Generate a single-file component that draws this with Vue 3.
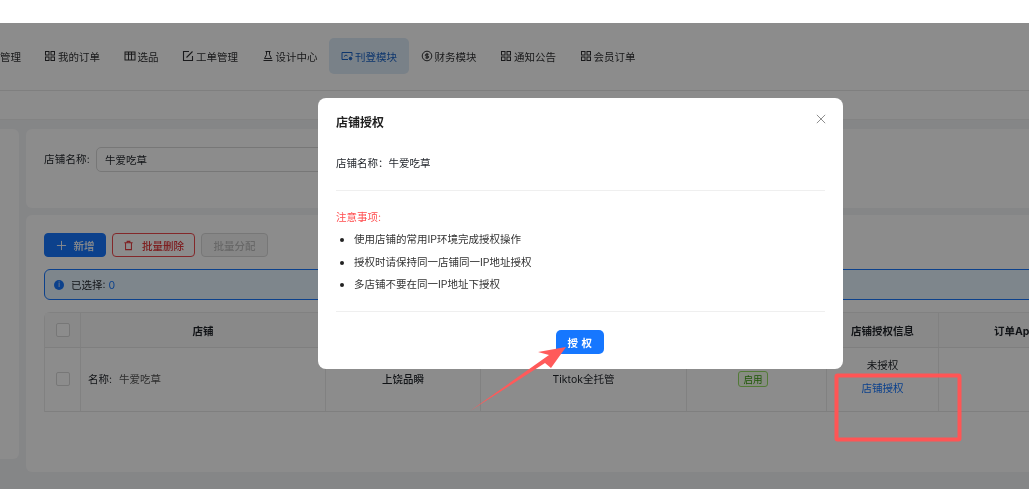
<script setup>
const navItems = [
  { label: '管理', icon: 'none', cut: true },
  { label: '我的订单', icon: 'apps' },
  { label: '选品', icon: 'table' },
  { label: '工单管理', icon: 'edit' },
  { label: '设计中心', icon: 'flask' },
  { label: '刊登模块', icon: 'screen', active: true },
  { label: '财务模块', icon: 'coin' },
  { label: '通知公告', icon: 'apps' },
  { label: '会员订单', icon: 'apps' },
]
const notes = ['使用店铺的常用IP环境完成授权操作', '授权时请保持同一店铺同一IP地址授权', '多店铺不要在同一IP地址下授权']
</script>

<template>
  <div class="shot">
    <div class="topstrip"></div>
    <div class="stage">
      <nav class="nav">
        <a v-for="item in navItems" :key="item.label" class="nav-item" :class="{ active: item.active, cut: item.cut }">
          <svg v-if="item.icon === 'apps'" class="ico" viewBox="0 0 12 12" fill="none" stroke="currentColor" stroke-width="1">
            <rect x="1.5" y="1.5" width="3.5" height="3.5" /><rect x="7" y="1.5" width="3.5" height="3.5" />
            <rect x="1.5" y="7" width="3.5" height="3.5" /><rect x="7" y="7" width="3.5" height="3.5" />
          </svg>
          <svg v-else-if="item.icon === 'table'" class="ico" viewBox="0 0 12 12" fill="none" stroke="currentColor" stroke-width="1">
            <rect x="1" y="2" width="10" height="8" /><path d="M1 4.2h10M4.5 2v8M7.5 2v8" />
          </svg>
          <svg v-else-if="item.icon === 'edit'" class="ico" viewBox="0 0 12 12" fill="none" stroke="currentColor" stroke-width="1.1">
            <path d="M10.5 6v4.5h-9v-9H7" /><path d="M4.5 7.5 10.5 1.5" />
          </svg>
          <svg v-else-if="item.icon === 'flask'" class="ico" viewBox="0 0 12 12" fill="none" stroke="currentColor" stroke-width="1">
            <path d="M3.5 1.5h5M4.5 1.5v3.2L2.5 8.5h7L7.5 4.7V1.5M1.5 10.5h9" />
          </svg>
          <svg v-else-if="item.icon === 'screen'" class="ico" viewBox="0 0 12 12" fill="none" stroke="currentColor" stroke-width="1">
            <path d="M11 6V2.5H1v7h6" /><path d="M3 6.5 5 5l1.5 1" /><circle cx="9.5" cy="8.5" r="1.3" fill="currentColor" />
          </svg>
          <svg v-else-if="item.icon === 'coin'" class="ico" viewBox="0 0 12 12" fill="none" stroke="currentColor" stroke-width="1">
            <circle cx="6" cy="6" r="4.8" /><path d="M7.6 4.3H5.2a.9.9 0 0 0 0 1.8h1.6a.9.9 0 0 1 0 1.8H4.4M6 3v6" />
          </svg>
          <span>{{ item.label }}</span>
        </a>
      </nav>
      <div class="tabs"></div>
      <main class="main">
        <aside class="side"></aside>
        <div class="content">
          <section class="card search">
            <label class="search-label">店铺名称:</label>
            <div class="input">牛爱吃草</div>
          </section>
          <section class="card list">
            <div class="actions">
              <button class="btn primary">
                <svg class="btn-ico" viewBox="0 0 12 12" fill="none" stroke="currentColor" stroke-width="1"><path d="M6 1v10M1 6h10" /></svg>
                新增
              </button>
              <button class="btn danger">
                <svg class="btn-ico" viewBox="0 0 12 12" fill="none" stroke="currentColor" stroke-width="1.1"><path d="M1.5 3h9M4.5 3V1.5h3V3M2.8 3v7.5h6.4V3" /></svg>
                批量删除
              </button>
              <button class="btn muted">批量分配</button>
            </div>
            <div class="alert">
              <span class="alert-dot">i</span>
              <span>已选择: <em>0</em></span>
            </div>
            <div class="table">
              <div class="row head">
                <div class="cell c0"><i class="check"></i></div>
                <div class="cell c1">店铺</div>
                <div class="cell c2"></div>
                <div class="cell c3"></div>
                <div class="cell c4"></div>
                <div class="cell c5">店铺授权信息</div>
                <div class="cell c6 api">订单Api</div>
              </div>
              <div class="row body">
                <div class="cell c0"><i class="check"></i></div>
                <div class="cell c1 name"><b>名称:</b>牛爱吃草</div>
                <div class="cell c2 shop">上饶品瞬</div>
                <div class="cell c3">Tiktok全托管</div>
                <div class="cell c4"><span class="tag">启用</span></div>
                <div class="cell c5 auth"><span>未授权</span><a>店铺授权</a></div>
                <div class="cell c6"></div>
              </div>
            </div>
          </section>
        </div>
      </main>

      <div class="mask"></div>

      <div class="modal">
        <header class="modal-head">
          <h3>店铺授权</h3>
          <svg class="close" viewBox="0 0 12 12" fill="none" stroke="currentColor" stroke-width="1"><path d="M1 1l10 10M11 1 1 11" /></svg>
        </header>
        <p class="store">店铺名称：牛爱吃草</p>
        <div class="notice">
          <p class="notice-title">注意事项:</p>
          <ul>
            <li v-for="n in notes" :key="n">{{ n }}</li>
          </ul>
        </div>
        <footer class="modal-foot"><button class="auth-btn">授 权</button></footer>
      </div>
    </div>

    <svg class="mark" width="1029" height="489" viewBox="0 0 1029 489">
      <polygon points="470,411 549,355 538,352 566,347 551,368 545,363" fill="#ff5a5a" />
      <rect x="836.5" y="375.5" width="123" height="64" rx="1" fill="none" stroke="#ff5555" stroke-width="4" />
    </svg>
  </div>
</template>

<style scoped>
.shot {
  position: relative;
  width: 1029px;
  height: 489px;
  overflow: hidden;
  background: #fff;
  font-family: "Inter", "Noto Sans CJK SC", "Liberation Sans", sans-serif;
  font-size: 10.5px;
  color: #1f2329;
}
.topstrip { height: 23px; background: #fff; }
.stage {
  position: relative;
  height: 466px;
  overflow: hidden;
  background: #f3f4f6;
  filter: blur(0.3px);
}
.nav {
  display: flex;
  align-items: center;
  height: 68px;
  margin-left: -21px;
  padding-bottom: 1px;
  background: #fff;
  border-bottom: 1px solid #e8e8e8;
  box-sizing: border-box;
}
.nav-item {
  display: flex;
  align-items: center;
  gap: 2px;
  height: 36px;
  padding: 0 11.75px;
  border-radius: 5px;
  color: #303133;
  white-space: nowrap;
}
.nav-item.cut { padding: 0 11.25px 0 21px; }
.nav-item.active { background: #dcebf8; color: #1a63c7; }
.ico { width: 12px; height: 12px; flex: none; }
.tabs { height: 29px; background: #fff; border-bottom: 1px solid #eeeeee; box-sizing: border-box; }
.main { display: flex; gap: 7px; padding-top: 9px; margin-left: -40px; }
.side { width: 59px; height: 330px; flex: none; background: #fff; border-radius: 6px; }
.content { flex: 1; display: flex; flex-direction: column; gap: 7px; min-width: 0; margin-right: -40px; }
.card { background: #fff; border-radius: 6px; box-sizing: border-box; }
.search { height: 79px; padding: 18px; display: flex; align-items: flex-start; }
.search-label { line-height: 26px; width: 52px; flex: none; letter-spacing: 0.2px; }
.input {
  width: 400px;
  height: 25px;
  line-height: 25px;
  padding-left: 8px;
  border: 1px solid #d9d9d9;
  border-radius: 5px;
  box-sizing: border-box;
}
.list { height: 257px; padding: 18px; }
.actions { display: flex; gap: 6px; }
.btn {
  display: flex;
  align-items: center;
  justify-content: center;
  gap: 7px;
  height: 24px;
  padding: 0;
  border-radius: 4px;
  border: 1px solid;
  background: #fff;
  font: inherit;
  font-weight: 500;
  box-sizing: border-box;
}
.btn-ico { width: 11px; height: 11px; }
.primary { width: 62px; background: #1677ff; border-color: #1677ff; color: #fff; }
.danger { width: 83px; color: #e5383b; border-color: #ef4a4d; gap: 8px; }
.muted { width: 67px; color: #bdbdbd; border-color: #d9d9d9; background: #f5f5f5; }
.alert {
  display: flex;
  align-items: center;
  gap: 7px;
  height: 31px;
  margin-top: 12px;
  padding-left: 9px;
  border: 1px solid #1677ff;
  border-radius: 6px;
  background: #e6f4ff;
  box-sizing: border-box;
}
.alert em { font-style: normal; color: #1677ff; }
.alert-dot {
  width: 10px;
  height: 10px;
  border-radius: 50%;
  background: #1677ff;
  color: #fff;
  font-size: 7px;
  line-height: 10px;
  text-align: center;
}
.table { margin-top: 12px; border: 1px solid #ececec; border-bottom: 0; border-radius: 6px 6px 0 0; width: 1100px; box-sizing: border-box; }
.row { display: flex; border-bottom: 1px solid #e8e8e8; box-sizing: border-box; }
.head { height: 35px; background: #fafafa; font-weight: 700; }
.body { height: 64px; }
.cell {
  display: flex;
  align-items: center;
  justify-content: center;
  border-right: 1px solid #ececec;
  box-sizing: border-box;
  flex: none;
}
.c0 { width: 36px; }
.c1 { width: 245px; }
.c2 { width: 155px; }
.c3 { width: 206px; }
.c4 { width: 140px; }
.c5 { width: 112px; }
.c6 { width: 180px; border-right: 0; }
.api { justify-content: flex-start; padding-left: 55px; }
.check { width: 12px; height: 12px; border: 1px solid #d9d9d9; border-radius: 2px; background: #fff; }
.name { justify-content: flex-start; padding-left: 7px; gap: 7px; color: #555; }
.name b { font-weight: 400; color: #1f2329; }
.body .cell { padding-bottom: 2px; }
.shop { font-weight: 500; }
.tag {
  width: 30px;
  height: 16px;
  margin-right: 7px;
  line-height: 15px;
  text-align: center;
  font-size: 9.5px;
  color: #389e0d;
  background: #f6ffed;
  border: 1px solid #95de64;
  border-radius: 3px;
  box-sizing: border-box;
}
.body .auth { flex-direction: column; gap: 8px; padding-bottom: 7px; }
.auth a { color: #1677ff; }
.mask { position: absolute; inset: 0; background: rgba(0, 0, 0, 0.45); }
.modal {
  position: absolute;
  left: 318px;
  top: 75px;
  width: 525px;
  height: 271px;
  padding: 0 18px;
  background: #fff;
  border-radius: 8px;
  box-sizing: border-box;
  display: flex;
  flex-direction: column;
}
.modal-head { display: flex; justify-content: space-between; height: 50px; padding-top: 17px; box-sizing: border-box; }
.modal-head h3 { margin: 0; font-size: 12px; line-height: 15px; font-weight: 700; color: #1f1f1f; }
.close { width: 10px; height: 10px; color: #777; margin-top: -1px; margin-right: -1px; }
.store { margin: 0; height: 43px; line-height: 32px; border-bottom: 1px solid #efefef; width: 489px; box-sizing: border-box; }
.notice { width: 489px; height: 121px; border-bottom: 1px solid #efefef; box-sizing: border-box; padding-top: 20px; }
.notice-title { margin: 0; color: #ff4d4f; line-height: 14px; }
.notice ul { margin: 8px 0 0; padding: 0 0 0 4px; list-style: none; }
.notice li { display: flex; align-items: center; gap: 10px; line-height: 14px; margin-bottom: 8.5px; color: #333; }
.notice li::before { content: ""; width: 4px; height: 4px; border-radius: 50%; background: #222; flex: none; }
.modal-foot { display: flex; justify-content: center; padding-top: 18px; width: 489px; }
.auth-btn {
  width: 48px;
  height: 24px;
  margin-right: 1px;
  padding: 0;
  border: 0;
  border-radius: 5px;
  background: #1677ff;
  color: #fff;
  font: inherit;
  font-weight: 700;
  letter-spacing: 0.5px;
}
.mark { position: absolute; left: 0; top: 0; pointer-events: none; }
</style>
